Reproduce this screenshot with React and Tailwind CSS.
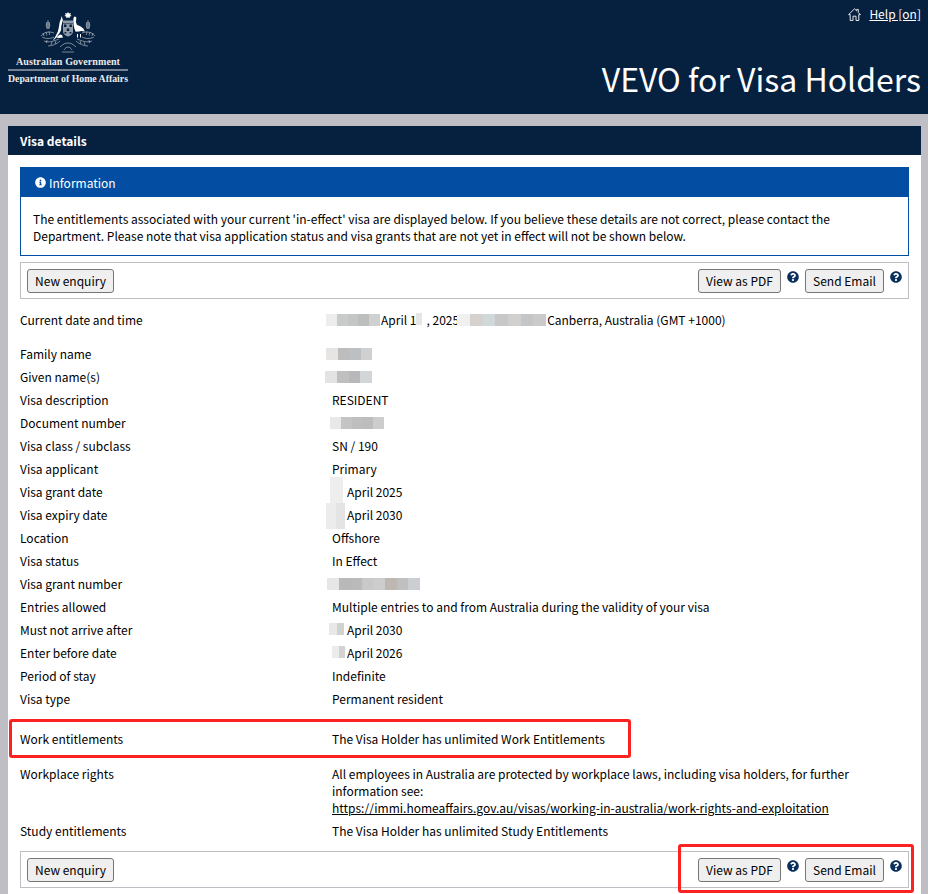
import { FaInfoCircle, FaQuestionCircle } from "react-icons/fa";

// pixelated smears that hide personal details in the screenshot
function Smear({ className, cells }) {
  return (
    <span className={"absolute flex h-[12px] " + className}>
      {cells.map((c, i) => (
        <span key={i} className="h-full flex-1" style={{ backgroundColor: c }} />
      ))}
    </span>
  );
}

function Crest() {
  return (
    <svg viewBox="0 0 56 42" className="h-[42px] w-[56px]" fill="white">
      {/* star */}
      <path d="M28 1l1 1.6 1.8-.5-.5 1.8 1.3 1.1-1.8.5-.3 1.8-1.5-1-1.5 1-.3-1.8-1.8-.5 1.3-1.1-.5-1.8 1.8.5z" />
      {/* kangaroo */}
      <path d="M21.5 5l.8 2 .6 2.2-.6 1.8-1 4.2-.2 4-1.6 2.8-3.6 5-3.4 3 2.6-4 2.8-5.4 1-4.6.8-5 1.4-3.6z" />
      <path d="M16 26.5l4-3 2 .6 1 2.4-3.5.6z" />
      {/* emu */}
      <path d="M34.5 5.5l1.6.6.2 1.6-.4 3.4 1 2.6 3.4 1.6 3 2.2 1.6 3-3.4-.6-2.8.6-3 .2-1.2-2.6-.8-3.6-.4-4.4.2-3z" />
      <path d="M37 23h1v3.5h-1zM40 23h1v3.5h-1z" />
      {/* shield */}
      <rect x="23" y="9.5" width="10" height="3" opacity="0.55" />
      <path d="M23 13h10v7.5c0 2.5-2.5 4.5-5 5-2.5-.5-5-2.5-5-5z" opacity="0.55" />
      <path d="M24 13.5h2.4v2.6H24zM29.5 13.5h2.4v2.6h-2.4zM26.8 17.5h2.4v2.6h-2.4zM24.5 21h1.8v1.6h-1.8zM29.6 21h1.8v1.6h-1.8z" fill="#06213f" />
      {/* side sprays */}
      <g stroke="white" strokeWidth="0.55" fill="none" opacity="0.85">
        <path d="M7 11c-1 2-1 5 .4 7M9 11c1 2 1 5-.4 7M8 9v9M6 14h4M6.5 12h3M6.5 16h3" />
        <path d="M47 11c-1 2-1 5 .4 7M49 11c1 2 1 5-.4 7M48 9v9M46 14h4M46.5 12h3M46.5 16h3" />
        <path d="M1 25c3-4 8-5 13-3M2 26c4 2 8 2 12 0M3 22l1 3M6 21l1 3.5M9 20.5l.6 3.5" />
        <path d="M55 25c-3-4-8-5-13-3M54 26c-4 2-8 2-12 0M53 22l-1 3M50 21l-1 3.5M47 20.5l-.6 3.5" />
        <path d="M4 30c5 2 10 0 15-2M8 35c4 0 9-2 12-5M12 31l-1 3M16 30l-1 3M7 29l-.6 3" />
        <path d="M52 30c-5 2-10 0-15-2M48 35c-4 0-9-2-12-5M44 31l1 3M40 30l1 3M49 29l.6 3" />
        <path d="M20 36c3-3 5-4 8-4s5 1 8 4M24 39c1-2 3-3 4-3s3 1 4 3M22 41h12" />
      </g>
    </svg>
  );
}

function HomeIcon() {
  return (
    <svg viewBox="0 0 13 13" className="h-[13px] w-[13px]" fill="none" stroke="#e3e6ea" strokeWidth="1">
      <path d="M.6 6.6L6.5.8l2.2 2.1V1.4h1.6v3.1l2.1 2.1h-1.6v5.9H8V8.2H5v4.4H2.2V6.6z" />
    </svg>
  );
}

function Button({ children, className = "" }) {
  return (
    <button className={"h-[24px] rounded-[3px] border border-[#767676] bg-[#efefef] text-[12px] leading-[22px] text-black " + className}>
      {children}
    </button>
  );
}

function Toolbar({ className = "" }) {
  return (
    <div className={"flex h-[37px] items-start justify-between border border-[#bebec4] pt-[6px] pl-[6px] " + className}>
      <Button className="w-[87px]">New enquiry</Button>
      <div className="flex items-start">
        <Button className="w-[83px]">View as PDF</Button>
        <FaQuestionCircle className="mt-[2px] ml-[6px] h-[12px] w-[12px] text-[#0a2f5c]" />
        <Button className="ml-[6px] w-[79px]">Send Email</Button>
        <FaQuestionCircle className="mt-[2px] mr-[6px] ml-[6px] h-[12px] w-[12px] text-[#0a2f5c]" />
      </div>
    </div>
  );
}

function Row({ label, children, className = "" }) {
  return (
    <div className={"flex py-[3px] text-[12px] leading-[17px] text-black " + className}>
      <div className="w-[312px] shrink-0">{label}</div>
      <div className="relative flex-1">{children}</div>
    </div>
  );
}

export default function App() {
  return (
    <div className="h-[894px] overflow-hidden bg-[#bebec4] font-['Noto_Sans_CJK_SC',sans-serif]">
      <header className="relative flex h-[114px] justify-between bg-[#06213f] pr-[7px] text-white">
        <div className="ml-[8px] flex w-[120px] flex-col items-center pt-[11px] font-['Liberation_Serif',serif] font-bold text-[#e9ebef]">
          <Crest />
          <div className="mt-[3px] text-[10px] leading-[12px] tracking-[0.1px]">Australian Government</div>
          <div className="mt-[1px] h-[2px] w-full bg-[#74808f]" />
          <div className="mt-[2px] text-[9.8px] leading-[12px] whitespace-nowrap">Department of Home Affairs</div>
        </div>
        <div className="flex flex-col items-end">
          <div className="mt-[6px] flex items-center">
            <HomeIcon />
            <a className="ml-[8px] text-[12px] leading-[16px] underline">Help [on]</a>
          </div>
          <h1 className="mt-[34px] text-[32px] leading-[44px] font-normal whitespace-nowrap">VEVO for Visa Holders</h1>
        </div>
      </header>

      <main className="relative mt-[12px] mr-[7px] ml-[8px] bg-white pb-[12px]">
        <div className="h-[29px] bg-[#06213f] pl-[12px] text-[12px] leading-[29px] font-bold text-white">Visa details</div>
        <div className="px-[12px] pt-[12px]">
          <div className="border border-[#034ea2]">
            <div className="flex h-[29px] items-center bg-[#034ea2] pl-[14px] text-[12px] text-white">
              <FaInfoCircle className="mr-[3px] h-[11px] w-[11px]" />
              Information
            </div>
            <p className="px-[12px] pt-[13px] pb-[11px] text-[12px] leading-[17px] text-black">
              The entitlements associated with your current 'in-effect' visa are displayed below. If you believe these details are not correct, please contact the Department. Please note that visa application status and visa grants that are not yet in effect will not be shown below.
            </p>
          </div>

          <Toolbar className="mt-[6px]" />

          <Row label="Current date and time" className="mt-[9px] mb-[11px]">
            <span className="ml-[49px]">April 1</span>
            <span className="ml-[10px]">, 2025</span>
            <span className="ml-[88px]">Canberra, Australia (GMT +1000)</span>
            <Smear className="top-[3px] -left-[6px] w-[54px]" cells={["#eceded", "#c9caca", "#c4c5c5", "#bcbdbd", "#cfd0d0"]} />
            <Smear className="top-[2px] left-[84px] w-[6px]" cells={["#e6e6e6"]} />
            <Smear className="top-[3px] left-[125px] w-[89px]" cells={["#f0f0f0", "#d6d1cd", "#d0d8da", "#c8c8c8", "#d2d0cf", "#c4c5c7", "#cacaca"]} />
          </Row>
          <Row label="Family name"><Smear className="top-[3px] -left-[6px] w-[46px]" cells={["#e7e5e3", "#bdbdbd", "#bcc0c2", "#d0d0d0"]} /></Row>
          <Row label="Given name(s)"><Smear className="top-[3px] -left-[7px] w-[47px]" cells={["#e3e3e3", "#bfbfbf", "#b8b7b9", "#d2d6d9"]} /></Row>
          <Row label="Visa description">RESIDENT</Row>
          <Row label="Document number"><Smear className="top-[3px] -left-[2px] w-[54px]" cells={["#e8e8e8", "#c4c4c4", "#bfbfbf", "#bdbdbd", "#cdcdcd"]} /></Row>
          <Row label="Visa class / subclass">SN / 190</Row>
          <Row label="Visa applicant">Primary</Row>
          <Row label="Visa grant date">
            <span className="ml-[15px]">April 2025</span>
            <Smear className="-top-[6px] -left-[2px] h-[27px]! w-[13px]" cells={["#eeeeee"]} />
          </Row>
          <Row label="Visa expiry date">
            <span className="ml-[15px]">April 2030</span>
            <Smear className="-top-[3px] -left-[6px] h-[26px]! w-[19px]" cells={["#ececec", "#e4e4e4"]} />
          </Row>
          <Row label="Location">Offshore</Row>
          <Row label="Visa status">In Effect</Row>
          <Row label="Visa grant number"><Smear className="top-[3px] -left-[5px] w-[93px]" cells={["#e6e6e6", "#b9b9b9", "#bababa", "#c9c9c9", "#cdcdcd", "#bdb9b2", "#c0c0c0", "#cbced2"]} /></Row>
          <Row label="Entries allowed">Multiple entries to and from Australia during the validity of your visa</Row>
          <Row label="Must not arrive after">
            <span className="ml-[15px]">April 2030</span>
            <Smear className="top-[2px] -left-[3px] w-[15px]" cells={["#e8e8e8", "#d0d2d0"]} />
          </Row>
          <Row label="Enter before date">
            <span className="ml-[15px]">April 2026</span>
            <Smear className="top-[2px] left-0 w-[13px]" cells={["#ececec", "#d2d2d2"]} />
          </Row>
          <Row label="Period of stay">Indefinite</Row>
          <Row label="Visa type">Permanent resident</Row>

          <Row label="Work entitlements" className="mt-[17px]">The Visa Holder has unlimited Work Entitlements</Row>
          <Row label="Workplace rights" className="mt-[12px]">
            All employees in Australia are protected by workplace laws, including visa holders, for further
            <br />
            information see:
            <br />
            <a className="underline">https://immi.homeaffairs.gov.au/visas/working-in-australia/work-rights-and-exploitation</a>
          </Row>
          <Row label="Study entitlements">The Visa Holder has unlimited Study Entitlements</Row>

          <Toolbar className="mt-[9px]" />
        </div>
      </main>

      {/* red annotation boxes drawn on top of the screenshot */}
      <div className="absolute top-[719px] left-[9px] h-[39px] w-[622px] rounded-[3px] border-[3px] border-[#fb2222]" />
      <div className="absolute top-[844px] left-[678px] h-[49px] w-[236px] rounded-[3px] border-[3px] border-[#fb2222]" />
    </div>
  );
}
